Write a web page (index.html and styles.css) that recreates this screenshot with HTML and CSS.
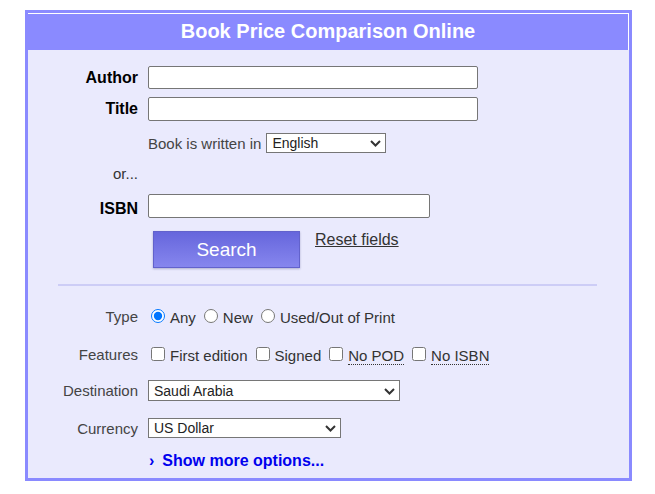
FILE: index.html
```html
<!DOCTYPE html>
<html>
<head>
<meta charset="utf-8">
<link rel="stylesheet" href="styles.css">
</head>
<body>
<div class="box">
  <div class="head">Book Price Comparison Online</div>
  <form class="form">
    <div class="row r-author">
      <label class="lbl strong">Author</label>
      <input class="txt w-long" type="text">
    </div>
    <div class="row r-title">
      <label class="lbl strong">Title</label>
      <input class="txt w-long h24" type="text">
    </div>
    <div class="row r-lang">
      <span class="lbl"></span>
      <span class="note">Book is written in</span>
      <span class="selwrap">
        <select class="sel s-lang"><option>English</option></select>
        <svg class="chevron" width="11" height="7" viewBox="0 0 11 7"><path d="M1 1 L5.5 5.5 L10 1" fill="none" stroke="#333" stroke-width="2"/></svg>
      </span>
    </div>
    <div class="row r-or">
      <span class="lbl">or...</span>
    </div>
    <div class="row r-isbn">
      <label class="lbl strong isbn">ISBN</label>
      <input class="txt w-isbn h24" type="text">
    </div>
    <div class="row r-search">
      <span class="lbl"></span>
      <button type="button" class="btn">Search</button>
      <a class="reset" href="#">Reset fields</a>
    </div>
    <div class="sep"></div>
    <div class="row r-type">
      <span class="lbl soft">Type</span>
      <span class="opts">
        <input type="radio" name="t" checked><span class="opt">Any</span>
        <input type="radio" name="t"><span class="opt">New</span>
        <input type="radio" name="t"><span class="opt">Used/Out of Print</span>
      </span>
    </div>
    <div class="row r-feat">
      <span class="lbl soft">Features</span>
      <span class="opts">
        <input type="checkbox"><span class="opt">First edition</span>
        <input type="checkbox"><span class="opt">Signed</span>
        <input type="checkbox"><span class="opt dotted">No POD</span>
        <input type="checkbox"><span class="opt dotted">No ISBN</span>
      </span>
    </div>
    <div class="row r-dest">
      <span class="lbl soft">Destination</span>
      <span class="selwrap">
        <select class="sel s-dest"><option>Saudi Arabia</option></select>
        <svg class="chevron" width="11" height="7" viewBox="0 0 11 7"><path d="M1 1 L5.5 5.5 L10 1" fill="none" stroke="#333" stroke-width="2"/></svg>
      </span>
    </div>
    <div class="row r-cur">
      <span class="lbl soft">Currency</span>
      <span class="selwrap">
        <select class="sel s-cur"><option>US Dollar</option></select>
        <svg class="chevron" width="11" height="7" viewBox="0 0 11 7"><path d="M1 1 L5.5 5.5 L10 1" fill="none" stroke="#333" stroke-width="2"/></svg>
      </span>
    </div>
    <div class="row r-more">
      <span class="lbl"></span>
      <a class="more" href="#"><span class="chev">›</span>Show more options...</a>
    </div>
  </form>
</div>
</body>
</html>
```
FILE: styles.css
```css
html, body {
  margin: 0;
  padding: 0;
  background: #ffffff;
}
body {
  padding: 10px 0 0 25px;
  font-family: "Liberation Sans", Arial, sans-serif;
  color: #333;
}
.box {
  box-sizing: border-box;
  width: 607px;
  border: 3px solid #8a8aff;
  background: #eaeafd;
}
.head {
  height: 37px;
  box-sizing: border-box;
  background: #8a8aff;
  border-top: 1px solid #ffffff;
  border-right: 1px solid #ffffff;
  color: #ffffff;
  font-weight: bold;
  font-size: 20px;
  display: flex;
  align-items: center;
  justify-content: center;
  padding-bottom: 1px;
}
.form {
  margin: 0;
  padding: 0 0 7px 0;
}
.row {
  display: flex;
  align-items: center;
  gap: 10px;
}
.lbl {
  width: 110px;
  flex: none;
  text-align: right;
  font-size: 15px;
  color: #333;
}
.strong {
  font-weight: bold;
  font-size: 16px;
  color: #000;
}
.soft {
  color: #444;
}
.txt {
  box-sizing: border-box;
  height: 23px;
  border: 1px solid #767676;
  border-radius: 2px;
  background: #fff;
  margin: 0;
  padding: 1px 3px;
  font-size: 14px;
}
.h24 { height: 24px; }
.w-long { width: 330px; }
.w-isbn { width: 282px; }
.r-author { margin-top: 16px; height: 23px; }
.r-title { margin-top: 8px; height: 24px; }
.r-lang { margin-top: 12px; height: 20px; }
.note {
  font-size: 15px;
  color: #444;
  margin-right: -5px;
}
.selwrap {
  position: relative;
  display: inline-flex;
}
.sel {
  box-sizing: border-box;
  margin: 0;
  font-family: "Liberation Sans", Arial, sans-serif;
  font-size: 14px;
  color: #222;
  background: #fff;
  border: 1px solid #767676;
  border-radius: 0;
  padding: 0 0 0 5px;
  -webkit-appearance: none;
  appearance: none;
}
.chevron {
  position: absolute;
  right: 5px;
  top: 50%;
  margin-top: -3px;
  pointer-events: none;
}
.s-lang { width: 120px; height: 20px; }
.s-dest { width: 252px; height: 21px; }
.s-cur { width: 193px; height: 20px; }
.r-or { margin-top: 10px; height: 20px; }
.r-isbn { margin-top: 11px; height: 24px; }
.isbn { position: relative; top: 3px; }
.r-search {
  margin-top: 13px;
  height: 37px;
  align-items: flex-start;
}
.btn {
  margin: 0 0 0 5px;
  width: 147px;
  height: 37px;
  box-sizing: border-box;
  border: 1px solid #6262cc;
  background: linear-gradient(#6666dc, #8686ee);
  color: #fff;
  font-family: "Liberation Sans", Arial, sans-serif;
  font-size: 19px;
  box-shadow: 0 1px 2px rgba(60, 60, 120, 0.35);
  padding: 0;
}
.reset {
  margin-left: 5px;
  font-size: 16px;
  color: #333;
  text-decoration: underline;
}
.sep {
  margin: 16px 32px 0 30px;
  height: 2px;
  background: #cdcdf6;
}
.r-type { margin-top: 20px; height: 20px; }
.r-feat { margin-top: 18px; height: 20px; }
.opts {
  display: flex;
  align-items: center;
  font-size: 15px;
  color: #333;
}
.opts input {
  margin: 0 5px 0 3px;
  width: 14px;
  height: 14px;
  flex: none;
}
.opt {
  margin-right: 5px;
  position: relative;
  top: 1px;
}
.dotted {
  border-bottom: 1px dotted #333;
  line-height: 17px;
  top: 2px;
}
.r-dest { margin-top: 16px; height: 21px; }
.r-cur { margin-top: 17px; height: 20px; }
.r-more { margin-top: 13px; height: 20px; }
.more {
  display: inline-flex;
  align-items: center;
  color: #0000ee;
  font-weight: bold;
  font-size: 16px;
  text-decoration: none;
}
.chev {
  font-size: 16px;
  margin: 0 8px 0 1px;
}
```
